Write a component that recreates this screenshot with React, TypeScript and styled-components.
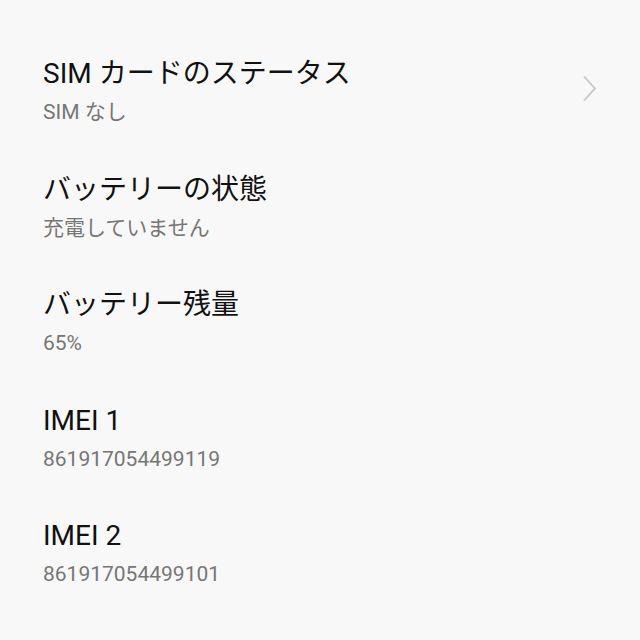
import React from "react";
import styled, { createGlobalStyle } from "styled-components";

const Global = createGlobalStyle`
  html, body { margin: 0; padding: 0; background: #f8f8f8; }
  body { font-family: Roboto, "Noto Sans CJK JP", sans-serif; overflow: hidden; }
`;

const Page = styled.div`
  width: 640px;
  height: 640px;
  overflow: hidden;
  background: #f8f8f8;
  padding-top: 32px;
  box-sizing: border-box;
`;

const List = styled.ul`
  list-style: none;
  margin: 0;
  padding: 0;
`;

const Row = styled.li`
  display: flex;
  align-items: center;
  height: 115.5px;
  padding: 24px 43px 21.5px 43px;
  box-sizing: border-box;
`;

const Texts = styled.div`
  flex: 1;
  display: flex;
  flex-direction: column;
  gap: 6px;
`;

const Title = styled.div`
  font-size: 28px;
  line-height: 36px;
  color: #111111;
  white-space: nowrap;
`;

const Sub = styled.div`
  font-size: 21px;
  line-height: 28px;
  color: #767676;
  white-space: nowrap;
`;

const Chevron = styled.svg`
  width: 15px;
  height: 27px;
  flex: none;
  margin-top: -6px;
`;

const items = [
  { title: "SIM カードのステータス", sub: "SIM なし", arrow: true },
  { title: "バッテリーの状態", sub: "充電していません" },
  { title: "バッテリー残量", sub: "65%" },
  { title: "IMEI 1", sub: "861917054499119" },
  { title: "IMEI 2", sub: "861917054499101" },
  { title: "IMEI SV", sub: "01" },
];

export default function App() {
  return (
    <Page>
      <Global />
      <List>
        {items.map((it) => (
          <Row key={it.title}>
            <Texts>
              <Title>{it.title}</Title>
              <Sub>{it.sub}</Sub>
            </Texts>
            {it.arrow && (
              <Chevron viewBox="0 0 15 27">
                <polyline
                  points="2,1.5 13,13.5 2,25.5"
                  fill="none"
                  stroke="#c6c6c6"
                  strokeWidth="1.8"
                />
              </Chevron>
            )}
          </Row>
        ))}
      </List>
    </Page>
  );
}
